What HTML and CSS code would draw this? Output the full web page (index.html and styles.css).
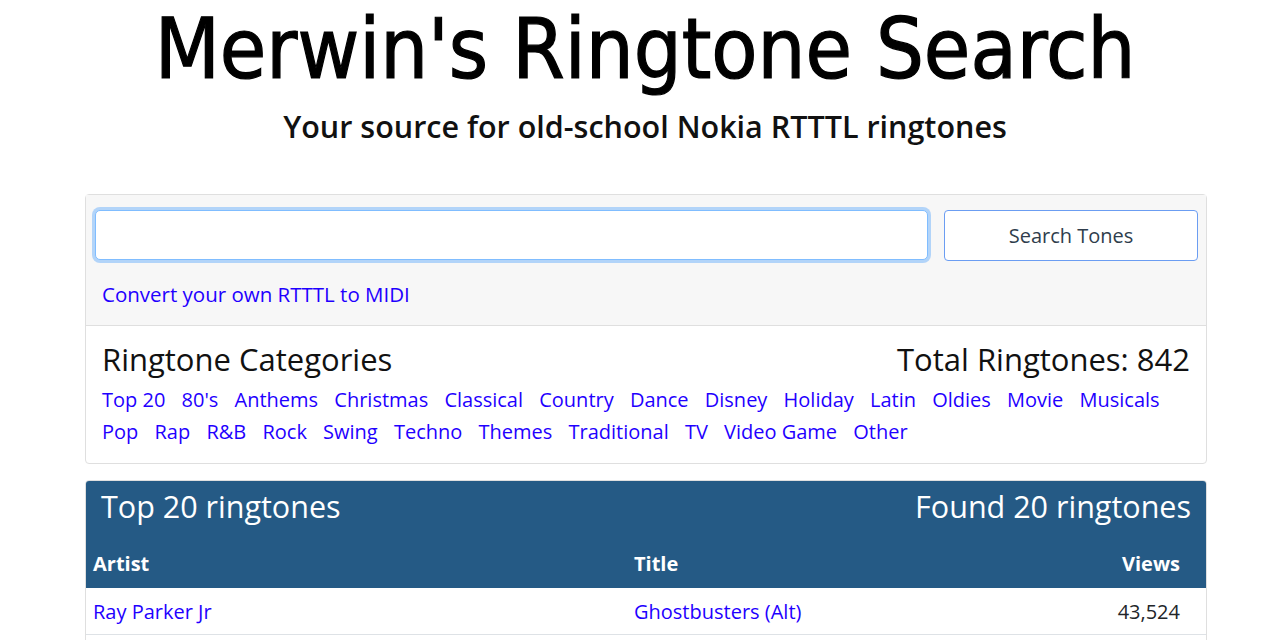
FILE: index.html
```html
<!DOCTYPE html>
<html lang="en">
<head>
<meta charset="utf-8">
<title>Merwin's Ringtone Search</title>
<link rel="stylesheet" href="styles.css">
</head>
<body>
<header class="masthead">
  <h1 class="brand">Merwin's Ringtone Search</h1>
  <h3 class="tagline">Your source for old-school Nokia RTTTL ringtones</h3>
</header>
<main class="container">
  <section class="card">
    <div class="card-header">
      <form class="search-row">
        <input class="search-input" type="text" aria-label="Search">
        <button class="search-btn" type="button">Search Tones</button>
      </form>
      <a class="convert" href="#">Convert your own RTTTL to MIDI</a>
    </div>
    <div class="card-body">
      <div class="split-head">
        <h3 class="h-md">Ringtone Categories</h3>
        <h3 class="h-md">Total Ringtones: 842</h3>
      </div>
      <nav class="cats">
        <a href="#">Top 20</a><a href="#">80's</a><a href="#">Anthems</a><a href="#">Christmas</a><a href="#">Classical</a><a href="#">Country</a><a href="#">Dance</a><a href="#">Disney</a><a href="#">Holiday</a><a href="#">Latin</a><a href="#">Oldies</a><a href="#">Movie</a><a href="#">Musicals</a><a href="#">Pop</a><a href="#">Rap</a><a href="#">R&amp;B</a><a href="#">Rock</a><a href="#">Swing</a><a href="#">Techno</a><a href="#">Themes</a><a href="#">Traditional</a><a href="#">TV</a><a href="#">Video Game</a><a href="#">Other</a>
      </nav>
    </div>
  </section>
  <section class="card results">
    <div class="results-head">
      <h3 class="h-lg">Top 20 ringtones</h3>
      <h3 class="h-lg">Found 20 ringtones</h3>
    </div>
    <table class="tones">
      <thead>
        <tr><th class="col-artist">Artist</th><th class="col-title">Title</th><th class="col-views">Views</th></tr>
      </thead>
      <tbody>
        <tr><td><a href="#">Ray Parker Jr</a></td><td><a href="#">Ghostbusters (Alt)</a></td><td class="col-views">43,524</td></tr>
        <tr><td>&nbsp;</td><td></td><td></td></tr>
      </tbody>
    </table>
  </section>
</main>
</body>
</html>
```
FILE: styles.css
```css
* { box-sizing: border-box; }
html, body { height: 100%; }
body {
  margin: 0;
  font-family: "Open Sans", "Noto Sans", sans-serif;
  color: #212529;
  background: #fff;
  overflow: hidden;
}
a { color: #1f00ff; text-decoration: none; }

.masthead { text-align: center; padding-left: 10px; }
.brand {
  margin: 0;
  padding-top: 1px;
  font-family: "Comic Sans MS", "DejaVu Sans Condensed", "DejaVu Sans", sans-serif;
  font-stretch: semi-condensed;
  font-weight: normal;
  font-size: 84px;
  line-height: 96px;
  color: #000;
  -webkit-text-stroke: 1.2px #000;
  white-space: nowrap;
}
.tagline {
  margin: 11px 0 0;
  font-size: 30.5px;
  font-weight: 600;
  line-height: 36px;
  color: #111;
}

.container {
  width: 1122px;
  margin: 50px 0 0 85px;
}
.card {
  border: 1px solid #dfdfdf;
  border-radius: 4px;
  background: #fff;
}
.card-header {
  background: #f7f7f7;
  padding: 15px 8px 16px 9px;
  border-bottom: 1px solid #dfdfdf;
}
.search-row {
  display: flex;
  gap: 16px;
  margin: 0;
}
.search-input {
  flex: 1;
  height: 50px;
  border: 1px solid #80bdff;
  border-radius: 5px;
  box-shadow: 0 0 0 3px rgba(0, 123, 255, .28);
  background: #fff;
  outline: none;
  font: inherit;
  font-size: 20px;
  padding: 0 16px;
}
.search-btn {
  width: 254px;
  height: 51px;
  border: 1px solid #6b9df2;
  border-radius: 4px;
  background: #fff;
  color: #2f3d4c;
  font: inherit;
  font-size: 20px;
}
.convert {
  display: inline-block;
  margin: 18px 0 0 7px;
  font-size: 20.5px;
  line-height: 30px;
}

.card-body { padding: 16px 16px 15px; }
.split-head {
  display: flex;
  justify-content: space-between;
  align-items: baseline;
}
.h-md {
  margin: 0;
  font-size: 31px;
  font-weight: 400;
  line-height: 34px;
  color: #111;
}
.cats {
  display: flex;
  flex-wrap: wrap;
  column-gap: 16.2px;
  margin-top: 8px;
  font-size: 20px;
  line-height: 32px;
}

.results { margin-top: 16px; overflow: hidden; }
.results-head {
  display: flex;
  justify-content: space-between;
  align-items: baseline;
  background: #255a85;
  color: #fff;
  padding: 6px 15px 15px;
}
.h-lg {
  margin: 0;
  font-size: 30.5px;
  font-weight: 400;
  line-height: 38px;
}
.tones {
  width: 100%;
  border-collapse: collapse;
  font-size: 20px;
  line-height: 30px;
}
.tones thead tr { background: #255a85; color: #fff; }
.tones th {
  text-align: left;
  font-weight: 700;
  padding: 9px 7px 9px;
}
.tones td {
  padding: 9px 7px 7px;
  border-bottom: 1px solid #dee2e6;
}
.col-artist { width: 541px; }
.tones .col-views { text-align: right; padding-right: 26px; }
```
